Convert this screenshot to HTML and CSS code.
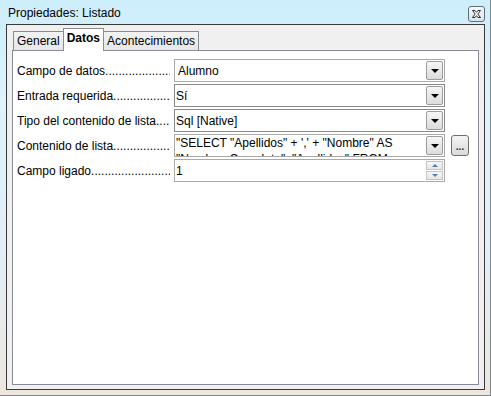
FILE: index.html
```html
<!DOCTYPE html>
<html lang="es">
<head>
  <meta charset="UTF-8" />
  <title>Propiedades: Listado</title>
  <link rel="stylesheet" href="styles.css">
</head>
<body>
  <div class="window">
    <div class="titlebar">
      <span class="title">Propiedades: Listado</span>
      <div class="close">
        <svg width="9" height="8" viewBox="0 0 9 8">
          <path d="M0.5 0.5h2.5l1.5 1.8l1.5-1.8h2.5l-2.7 3.5l2.7 3.5h-2.5l-1.5-1.8l-1.5 1.8h-2.5l2.7-3.5z" fill="#fff" stroke="#2b2b2b" stroke-width="1"/>
        </svg>
      </div>
    </div>

    <div class="client">
      <div class="tabs">
        <div class="tab">General</div>
        <div class="tab active">Datos</div>
        <div class="tab">Acontecimientos</div>
      </div>

      <div class="panel">
        <div class="row">
          <span class="label">Campo de datos..................................................</span>
          <div class="field">
            <span class="value wide">Alumno</span>
            <span class="drop"></span>
          </div>
        </div>
        <div class="row">
          <span class="label">Entrada requerida..................................................</span>
          <div class="field dark">
            <span class="value">Sí</span>
            <span class="drop"></span>
          </div>
        </div>
        <div class="row">
          <span class="label">Tipo del contenido de lista.....</span>
          <div class="field dark">
            <span class="value">Sql [Native]</span>
            <span class="drop"></span>
          </div>
        </div>
        <div class="row">
          <span class="label">Contenido de lista..................................................</span>
          <div class="field">
            <span class="value multi">"SELECT "Apellidos" + ',' + "Nombre" AS
"Nombre_Completo", "Apellidos" FROM "Alumnos"</span>
            <span class="drop"></span>
          </div>
          <div class="more">...</div>
        </div>
        <div class="row">
          <span class="label">Campo ligado..................................................</span>
          <div class="field">
            <span class="value">1</span>
            <span class="spin">
              <span class="spin-btn"><span class="up"></span></span>
              <span class="spin-btn"><span class="down"></span></span>
            </span>
          </div>
        </div>
      </div>
    </div>
  </div>
</body>
</html>
```

FILE: styles.css
```css
body {
  margin: 0;
  font-family: "Liberation Sans", Arial, sans-serif;
  font-size: 12px;
  color: #000;
}

.window {
  box-sizing: border-box;
  width: 491px;
  height: 396px;
  padding: 0 5px 5px 6px;
  border-right: 1px solid #7d8a90;
  border-bottom: 1px solid #7d8a90;
  background: linear-gradient(180deg, #cdeefb 0%, #def3fb 25%, #e3eef3 70%, #eee6dc 100%);
  display: flex;
  flex-direction: column;
}

.titlebar {
  height: 24px;
  display: flex;
  justify-content: space-between;
  align-items: flex-start;
}

.title {
  padding: 5px 0 0 2px;
  line-height: 16px;
  color: #000;
}

.close {
  box-sizing: border-box;
  width: 17px;
  height: 16px;
  margin-top: 6px;
  border: 1px solid #5f6f79;
  border-radius: 3px;
  background: linear-gradient(180deg, #f4fafd, #d6e6ef);
  display: flex;
  justify-content: center;
  align-items: center;
}

.client {
  flex: 1;
  border: 1px solid #3a3a3a;
  background: #f0f0f0;
  padding: 4px 5px 4px 5px;
  display: flex;
  flex-direction: column;
}

.tabs {
  display: flex;
  align-items: flex-end;
  height: 21px;
  padding-left: 1px;
}

.tab {
  height: 18px;
  line-height: 18px;
  padding: 0 3px;
  border: 1px solid #898c95;
  border-bottom: none;
  background: linear-gradient(180deg, #f3f3f3, #e6e6e6);
}

.tab + .tab {
  margin-left: -1px;
}

.tab.active {
  position: relative;
  z-index: 1;
  height: 22px;
  line-height: 19px;
  margin-bottom: -1px;
  padding: 0 3px;
  background: #fff;
  font-weight: bold;
}

.panel {
  flex: 1;
  border: 1px solid #898c95;
  background: #fff;
  padding: 8px 0 0 4px;
}

.row {
  display: flex;
  align-items: center;
  height: 23px;
  margin-bottom: 2px;
}

.label {
  width: 153px;
  margin-right: 4px;
  white-space: nowrap;
  overflow: hidden;
}

.field {
  box-sizing: border-box;
  width: 271px;
  height: 23px;
  border: 1px solid #a9a9a9;
  display: flex;
  align-items: center;
  padding-left: 1px;
}

.field.dark {
  border-color: #8a8a8a;
}

.value {
  flex: 1;
  white-space: nowrap;
  overflow: hidden;
}

.value.wide {
  padding-left: 2px;
}

.value.multi {
  align-self: stretch;
  white-space: pre-line;
  line-height: 16px;
}

.drop {
  box-sizing: border-box;
  width: 17px;
  height: 19px;
  margin-right: 1px;
  border: 1px solid #9c9c9c;
  border-radius: 2px;
  background: linear-gradient(180deg, #f6f6f6, #dcdcdc);
  display: flex;
  justify-content: center;
  align-items: center;
}

.drop::after {
  content: "";
  border-left: 4px solid transparent;
  border-right: 4px solid transparent;
  border-top: 4px solid #000;
  margin-top: 1px;
}

.more {
  box-sizing: border-box;
  width: 18px;
  height: 21px;
  margin-left: 6px;
  border: 1px solid #707070;
  border-radius: 3px;
  background: linear-gradient(180deg, #f4f4f4, #dadada);
  text-align: center;
  line-height: 22px;
  font-size: 10px;
  font-weight: bold;
  color: #333;
}

.spin {
  width: 17px;
  margin-right: 1px;
  display: flex;
  flex-direction: column;
  gap: 1px;
}

.spin-btn {
  box-sizing: border-box;
  height: 9px;
  border: 1px solid #c4c4c4;
  background: linear-gradient(180deg, #f7f7f7, #e6e6e6);
  display: flex;
  justify-content: center;
  align-items: center;
}

.up {
  border-left: 3px solid transparent;
  border-right: 3px solid transparent;
  border-bottom: 3px solid #5679b8;
}

.down {
  border-left: 3px solid transparent;
  border-right: 3px solid transparent;
  border-top: 3px solid #5679b8;
}
```
